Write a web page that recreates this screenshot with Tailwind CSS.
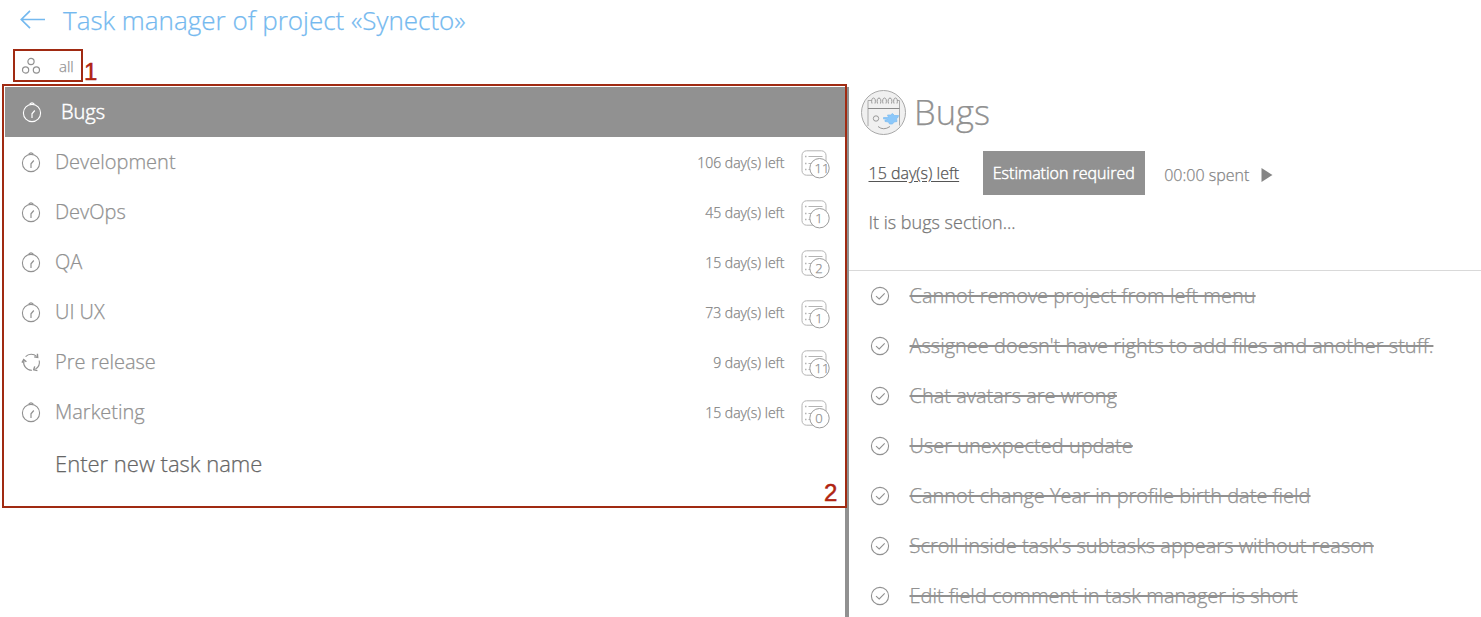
<!DOCTYPE html>
<html lang="en">
<head>
<meta charset="utf-8">
<title>Task manager</title>
<script src="https://cdn.jsdelivr.net/npm/@tailwindcss/browser@4"></script>
</head>
<body class="relative h-[617px] w-[1481px] overflow-hidden bg-white font-['Open_Sans',sans-serif] font-light text-[#919191] [-webkit-text-stroke:0.25px]">
<svg class="hidden">
  <symbol id="clock" viewBox="0 0 20 22"><g fill="none" stroke="currentColor" stroke-width="1.1"><circle cx="10" cy="12" r="8.6"/><path d="M7.600 3.400q2.400-3 4.800 0M10 17v-4.200l2.800-3.300" stroke-width="1.200"/></g></symbol>
  <symbol id="cycle" viewBox="0 0 20 20"><g fill="none" stroke="currentColor" stroke-width="1.100"><path d="M4.600 4.600A8 8 0 0 1 15.600 4.300M18.200 8.500A8 8 0 0 1 14.500 17M11 18.300A8 8 0 0 1 2.900 8.500"/><path d="M13.200 4.900l3.500.6-.3-3.700M13.700 14.400l-1 3.300 3.700.9M1 10.600l1.700-3 2.700 2.200" stroke-width="1.400"/></g></symbol>
  <symbol id="list" viewBox="0 0 29 29"><g fill="none" stroke="#b4b4b4" stroke-width="1"><rect x="1" y=".8" width="24" height="24.400" rx="4.500"/><path d="M7.500 6.500h14M7.500 13.500h6M7.500 19.500h2" stroke-width="1.200"/><path d="M4 6.500h1.500M4 13.500h1.500M4 19.500h1.500" stroke-width="1.400"/></g><circle cx="18.500" cy="18.200" r="9.700" fill="#fff" stroke="#9c9c9c"/></symbol>
  <symbol id="check" viewBox="0 0 20 20"><g fill="none" stroke="currentColor" stroke-width="1.100"><circle cx="10" cy="10" r="8.600"/><path d="M6 10.200l3.200 2.700 5.500-5.500"/></g></symbol>
</svg>

<div class="flex h-full flex-col">
  <header class="flex h-10 shrink-0 items-center pl-5 text-[#74b9ef]">
    <svg class="h-5 w-[26px]" viewBox="0 0 26 20" fill="none" stroke="currentColor" stroke-width="1.700"><path d="M25 9.500H1.500M10 .8L1.300 9.500l8.700 8.700"/></svg>
    <h1 class="ml-[17px] whitespace-nowrap text-[26px] leading-10">Task manager of project «Synecto»</h1>
  </header>
  <div class="flex h-[47px] shrink-0 items-center pt-[5px] pl-[21px]">
    <svg class="h-[18px] w-5" viewBox="0 0 20 18" fill="none" stroke="#919191" stroke-width="1.200"><circle cx="10" cy="4.500" r="3.100"/><circle cx="4.600" cy="13" r="3.100"/><circle cx="15.400" cy="13" r="3.100"/></svg>
    <span class="ml-[18px] text-[15px]">all</span>
  </div>
  <main class="flex h-[530px] shrink-0">
    <section class="w-[845px] pl-[5px]">
      <div class="flex h-[50px] items-center bg-[#919191] pl-[17px] text-white">
        <svg class="h-[22px] w-5"><use href="#clock"/></svg>
        <span class="ml-[19px] text-xl [-webkit-text-stroke:0.5px]">Bugs</span>
      </div>
      <ul id="tasks"></ul>
      <div class="flex h-[53px] items-center pl-[50px] text-[22px] text-[#666]">Enter new task name</div>
    </section>
    <div class="w-1 bg-[#919191]"></div>
    <section class="flex min-w-0 flex-1 flex-col">
      <div class="h-[184px] shrink-0 border-b border-[#d9d9d9]">
        <div class="flex h-[52px] items-center pl-3">
          <svg class="h-[46px] w-[46px]" viewBox="0 0 46 46" fill="none">
            <circle cx="22.500" cy="22.500" r="22" fill="#f0f0f0" stroke="#a8a8a8"/>
            <path d="M7 36V10.500h3.500M36 10.500h2.500v25" stroke="#aaa"/>
            <path d="M7 18.500h31.500" stroke="#8a8a8a"/>
            <path d="M11 13.500c-1-3 0-5.500 1.500-5.500s2.500 2.500 1.500 5.500M16.500 13.500c-1-3 0-5.500 1.500-5.500s2.500 2.500 1.500 5.500M22 13.500c-1-3 0-5.500 1.500-5.500s2.500 2.500 1.500 5.500M27.500 13.500c-1-3 0-5.500 1.500-5.500s2.500 2.500 1.500 5.500M33 13.500c-1-3 0-5.500 1.500-5.500s2.500 2.500 1.500 5.500" stroke="#999"/>
            <circle cx="15" cy="28.500" r="2.700" stroke="#999"/>
            <path d="M17 36.500q5.500 4.500 12 0" stroke="#999"/>
            <path d="M22.500 27.500h5l-1-2.500h3l2-1.500 2 2h4l-.5 2 -1.500 1 .5 3-3 .5-1.500 2h-3l-1-2-3.500-.5v-1.500h2v-1h-3.500z" fill="#8cc8fa" stroke="#7cbcf0" stroke-width=".7"/>
          </svg>
          <h2 class="-mt-0.5 ml-[7px] text-[34.500px] leading-none">Bugs</h2>
        </div>
        <div class="mt-3 flex h-11 items-center pl-[19.500px] text-base">
          <span class="text-[#555] underline underline-offset-2">15 day(s) left</span>
          <span class="ml-[23.600px] flex h-11 w-[162px] items-center justify-center bg-[#919191] text-white [-webkit-text-stroke:0.5px]">Estimation required</span>
          <span class="ml-[19.500px] pt-1 text-[#858585]">00:00 spent</span>
          <svg class="mt-1 ml-3 h-[14px] w-3" viewBox="0 0 12 14"><path d="M.5 0L11.500 7L.5 14z" fill="#858585"/></svg>
        </div>
        <p class="mt-[13px] pl-[19.500px] text-lg text-[#777]">It is bugs section...</p>
      </div>
      <ul id="subs"></ul>
    </section>
  </main>
</div>
<div class="absolute top-[49px] left-[13px] h-[33px] w-[70px] border-2 border-[#a02a12]"></div>
<div class="absolute top-[58px] left-[84px] font-['Liberation_Sans',sans-serif] text-2xl leading-7 font-normal text-[#b02411] [-webkit-text-stroke:0.5px]">1</div>
<div class="absolute top-[84px] left-[2px] h-[424px] w-[845px] border-2 border-[#a02a12]"></div>
<div class="absolute top-[479px] left-[824px] font-['Liberation_Sans',sans-serif] text-2xl leading-7 font-normal text-[#b02411] [-webkit-text-stroke:0.5px]">2</div>
<script>
const tasks=[["Development","106",11],["DevOps","45",1],["QA","15",2],["UI UX","73",1],["Pre release","9",11],["Marketing","15",0]];
document.getElementById("tasks").innerHTML=tasks.map(([n,d,c])=>`<li class="flex h-[50px] items-center pl-4 pr-[15px]">
<svg class="h-[22px] w-5"><use href="#${n==="Pre release"?"cycle":"clock"}"/></svg>
<span class="ml-3.5 flex-1 text-xl">${n}</span>
<span class="pt-px text-sm text-[#858585]">${d} day(s) left</span>
<span class="relative ml-[16.5px] mt-1 h-[29px] w-[29px]"><svg class="h-[29px] w-[29px]"><use href="#list"/></svg><span class="absolute top-[9px] ${c>9?"left-[11px]":"left-[8px]"} w-5 text-center text-[13px] leading-[18px]">${c}</span></span></li>`).join("");
const subs=["Cannot remove project from left menu","Assignee doesn't have rights to add files and another stuff.","Chat avatars are wrong","User unexpected update","Cannot change Year in profile birth date field","Scroll inside task's subtasks appears without reason","Edit field comment in task manager is short"];
document.getElementById("subs").innerHTML=subs.map(s=>`<li class="flex h-[50px] items-center pl-[21px]"><svg class="h-5 w-5"><use href="#check"/></svg><span class="ml-[19.5px] whitespace-nowrap text-xl line-through decoration-2">${s}</span></li>`).join("");
</script>
</body>
</html>
